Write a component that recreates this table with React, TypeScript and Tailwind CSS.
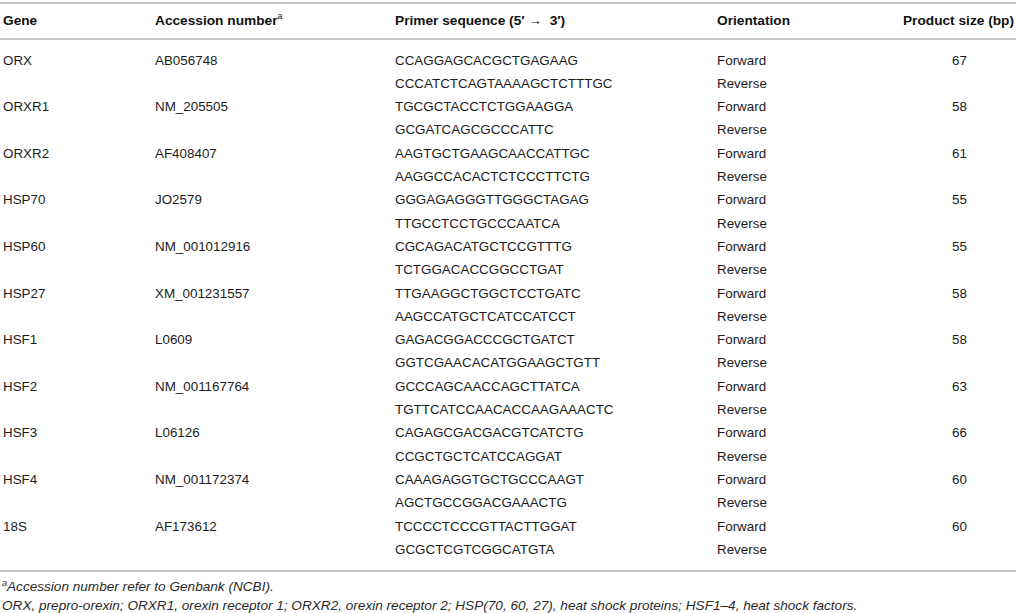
import React from 'react';

interface Gene {
  name: string;
  accession: string;
  forward: string;
  reverse: string;
  size: number;
}

const GENES: Gene[] = [
  { name: 'ORX', accession: 'AB056748', forward: 'CCAGGAGCACGCTGAGAAG', reverse: 'CCCATCTCAGTAAAAGCTCTTTGC', size: 67 },
  { name: 'ORXR1', accession: 'NM_205505', forward: 'TGCGCTACCTCTGGAAGGA', reverse: 'GCGATCAGCGCCCATTC', size: 58 },
  { name: 'ORXR2', accession: 'AF408407', forward: 'AAGTGCTGAAGCAACCATTGC', reverse: 'AAGGCCACACTCTCCCTTCTG', size: 61 },
  { name: 'HSP70', accession: 'JO2579', forward: 'GGGAGAGGGTTGGGCTAGAG', reverse: 'TTGCCTCCTGCCCAATCA', size: 55 },
  { name: 'HSP60', accession: 'NM_001012916', forward: 'CGCAGACATGCTCCGTTTG', reverse: 'TCTGGACACCGGCCTGAT', size: 55 },
  { name: 'HSP27', accession: 'XM_001231557', forward: 'TTGAAGGCTGGCTCCTGATC', reverse: 'AAGCCATGCTCATCCATCCT', size: 58 },
  { name: 'HSF1', accession: 'L0609', forward: 'GAGACGGACCCGCTGATCT', reverse: 'GGTCGAACACATGGAAGCTGTT', size: 58 },
  { name: 'HSF2', accession: 'NM_001167764', forward: 'GCCCAGCAACCAGCTTATCA', reverse: 'TGTTCATCCAACACCAAGAAACTC', size: 63 },
  { name: 'HSF3', accession: 'L06126', forward: 'CAGAGCGACGACGTCATCTG', reverse: 'CCGCTGCTCATCCAGGAT', size: 66 },
  { name: 'HSF4', accession: 'NM_001172374', forward: 'CAAAGAGGTGCTGCCCAAGT', reverse: 'AGCTGCCGGACGAAACTG', size: 60 },
  { name: '18S', accession: 'AF173612', forward: 'TCCCCTCCCGTTACTTGGAT', reverse: 'GCGCTCGTCGGCATGTA', size: 60 },
];

const font = { fontFamily: '"Liberation Sans", Arial, sans-serif' };

function Row({ cells }: { cells: [string, string, string, string, string] }) {
  return (
    <div className="flex h-[23.3px] items-center">
      <div className="w-[155px] pl-[3px]">{cells[0]}</div>
      <div className="w-[240px]">{cells[1]}</div>
      <div className="w-[322px]">{cells[2]}</div>
      <div className="w-[178px]">{cells[3]}</div>
      <div className="w-[72px] text-right">{cells[4]}</div>
    </div>
  );
}

export default function App() {
  return (
    <div className="w-[1016px] h-[613px] bg-white pt-[2px] text-[13.4px] text-[#1c1c1c]" style={font}>
      <div className="border-y-2 border-[#c6c6c6] h-[38px] flex items-center font-bold text-[13.7px] text-[#111]">
        <div className="w-[155px] pl-[3px]">Gene</div>
        <div className="w-[240px]">
          Accession number<sup className="font-normal text-[9px] align-baseline -top-[6px]">a</sup>
        </div>
        <div className="w-[322px]">Primer sequence (5′ → &nbsp;3′)</div>
        <div className="w-[180px]">Orientation</div>
        <div className="flex-1 text-right pr-[2px]">Product size (bp)</div>
      </div>
      <div className="pt-[9px] pb-[8px] border-b-2 border-[#c6c6c6]">
        {GENES.map((g) => (
          <React.Fragment key={g.name}>
            <Row cells={[g.name, g.accession, g.forward, 'Forward', String(g.size)]} />
            <Row cells={['', '', g.reverse, 'Reverse', '']} />
          </React.Fragment>
        ))}
      </div>
      <div className="pt-[5px] italic text-[13.6px] leading-[19px] text-[#2a2a2a] pl-[2px]">
        <p>
          <sup className="text-[9px] align-baseline -top-[5px]">a</sup>Accession number refer to Genbank (NCBI).
        </p>
        <p>
          ORX, prepro-orexin; ORXR1, orexin receptor 1; ORXR2, orexin receptor 2; HSP(70, 60, 27), heat shock proteins; HSF1–4, heat shock factors.
        </p>
      </div>
    </div>
  );
}
